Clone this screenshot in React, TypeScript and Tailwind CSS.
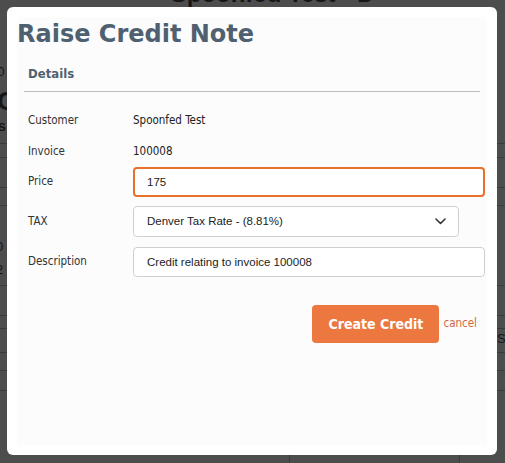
// Raise Credit Note modal, shown over a dimmed invoice page.
import React from "react";

const tahoma = { fontFamily: '"DejaVu Sans Condensed", "DejaVu Sans", sans-serif' };
const verdana = { fontFamily: '"DejaVu Sans", Verdana, sans-serif' };
const arial = { fontFamily: '"Liberation Sans", Arial, sans-serif' };

function Backdrop() {
  // page behind the overlay, mostly hidden; only its edges show
  return (
    <div className="flex h-full flex-col text-[#161616]" style={arial}>
      <div className="-mt-[20px] h-[82px] pl-[40px] text-center text-[24px] font-bold leading-[28px]">Spoonfed Test - D</div>
      <div className="h-[20px] -ml-[10px] text-[13px]">10</div>
      <div className="h-[38px] -ml-[10px] text-[26px] font-bold leading-[38px]">.C</div>
      <div className="h-[13px] -ml-[6px] text-[14px] font-bold leading-[13px]">ls</div>
      <div className="h-[11px] border-b border-[#3b3b3b]"></div>
      <div className="h-[14px] border-b border-[#3b3b3b]"></div>
      <div className="h-[30px] border-b border-[#3b3b3b]"></div>
      <div className="h-[18px] border-b border-[#3b3b3b]"></div>
      <div className="flex h-[50px] items-end -ml-[4px] text-[13px]">0</div>
      <div className="h-[30px] border-b border-[#3b3b3b] -ml-[4px] pt-[4px] text-[13px]">2</div>
      <div className="h-[30px] border-b border-[#3b3b3b]"></div>
      <div className="h-[13px] border-b border-[#3b3b3b]"></div>
      <div className="flex h-[24px] justify-end border-b border-[#3b3b3b] text-[13px]">
        <span className="-mr-[8px]">Sa</span>
      </div>
      <div className="h-[18px] border-b border-[#3b3b3b]"></div>
      <div className="h-[20px] border-b border-[#3b3b3b]"></div>
      <div className="flex flex-1">
        <div className="w-[290px] border-r border-[#3b3b3b] pl-[8px] text-[13px]">00</div>
        <div className="w-[170px] border-r border-[#3b3b3b]"></div>
      </div>
    </div>
  );
}

function Row({ label, children, h }: { label: string; children: React.ReactNode; h: string }) {
  return (
    <div className={`flex items-center ${h}`}>
      <div className="w-[116px] shrink-0 pl-[11px] text-[11.5px] text-[#333]" style={tahoma}>
        {label}
      </div>
      {children}
    </div>
  );
}

export default function App() {
  return (
    <div className="relative h-[463px] w-[505px] overflow-hidden bg-[#4d4d4d]">
      <Backdrop />

      <div className="absolute left-[7px] top-[7px] h-[448px] w-[490px] rounded-[6px] bg-white p-[10px]">
        <div className="flex h-full flex-col bg-[#fcfcfc]">
          <h1
            className="pt-[1px] text-[24px] font-bold leading-[32px] text-[#4f6170]"
            style={verdana}
          >
            Raise Credit Note
          </h1>

          <div className="mx-[7px] mt-[12px] border-b border-[#bdbdbd] pb-[5px] pl-[4px]">
            <h2 className="text-[13px] font-bold leading-[24px] text-[#4f6170]" style={tahoma}>
              Details
            </h2>
          </div>

          <div className="mt-[14px] flex flex-col">
            <Row label="Customer" h="h-[30px]">
              <span className="text-[11.5px] text-[#222]" style={tahoma}>Spoonfed Test</span>
            </Row>
            <Row label="Invoice" h="h-[31px]">
              <span className="text-[11.5px] text-[#222]" style={tahoma}>100008</span>
            </Row>
            <div className="flex flex-col gap-[9px]">
              <Row label="Price" h="h-[30px]">
                <input
                  defaultValue="175"
                  className="h-[30px] w-[352px] rounded-[4px] border-2 border-[#e8702a] bg-white px-[12px] text-[11.5px] text-[#222] outline-none"
                  style={arial}
                />
              </Row>
              <Row label="TAX" h="h-[31px]">
                <div
                  className="flex h-[31px] w-[326px] items-center justify-between rounded-[4px] border border-[#cfcfcf] bg-white pl-[13px] pr-[12px] text-[11.5px] text-[#222]"
                  style={arial}
                >
                  <span>Denver Tax Rate - (8.81%)</span>
                  <svg width="11" height="7" viewBox="0 0 11 7" fill="none">
                    <polyline points="1,1 5.5,5.5 10,1" stroke="#333" strokeWidth="1.6" strokeLinecap="round" strokeLinejoin="round" />
                  </svg>
                </div>
              </Row>
            </div>
            <div className="mt-[10px]">
              <Row label="Description" h="h-[30px]">
                <input
                  defaultValue="Credit relating to invoice 100008"
                  className="h-[30px] w-[352px] rounded-[4px] border border-[#cfcfcf] bg-white px-[13px] text-[11.5px] text-[#222] outline-none"
                  style={arial}
                />
              </Row>
            </div>
          </div>

          <div className="mt-[28px] flex items-center justify-end pr-[10px]">
            <button
              type="button"
              className="h-[38px] w-[127px] rounded-[4px] bg-[#ec773f] text-[14px] font-bold text-white"
              style={tahoma}
            >
              Create Credit
            </button>
            <a className="ml-[4px] text-[11.5px] text-[#d2693c]" style={tahoma}>
              cancel
            </a>
          </div>
        </div>
      </div>
    </div>
  );
}
